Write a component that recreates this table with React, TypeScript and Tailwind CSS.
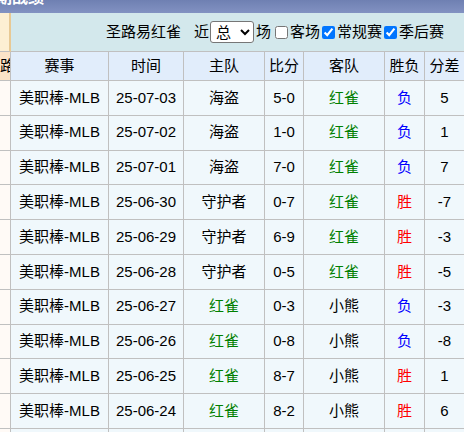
import React from 'react';

type Game = {
  date: string;
  home: string;
  score: string;
  away: string;
  result: '胜' | '负';
  diff: string;
};

const games: Game[] = [
  { date: '25-07-03', home: '海盗', score: '5-0', away: '红雀', result: '负', diff: '5' },
  { date: '25-07-02', home: '海盗', score: '1-0', away: '红雀', result: '负', diff: '1' },
  { date: '25-07-01', home: '海盗', score: '7-0', away: '红雀', result: '负', diff: '7' },
  { date: '25-06-30', home: '守护者', score: '0-7', away: '红雀', result: '胜', diff: '-7' },
  { date: '25-06-29', home: '守护者', score: '6-9', away: '红雀', result: '胜', diff: '-3' },
  { date: '25-06-28', home: '守护者', score: '0-5', away: '红雀', result: '胜', diff: '-5' },
  { date: '25-06-27', home: '红雀', score: '0-3', away: '小熊', result: '负', diff: '-3' },
  { date: '25-06-26', home: '红雀', score: '0-8', away: '小熊', result: '负', diff: '-8' },
  { date: '25-06-25', home: '红雀', score: '8-7', away: '小熊', result: '胜', diff: '1' },
  { date: '25-06-24', home: '红雀', score: '8-2', away: '小熊', result: '胜', diff: '6' },
];

const gridCols = 'grid grid-cols-[11px_98px_75px_81px_39px_81px_40px_40px]';
const cell = 'flex items-center justify-center border-r border-b border-[#c0c0c0] whitespace-nowrap overflow-hidden';

const teamColor = (name: string) => (name === '红雀' ? 'text-[#008000]' : 'text-black');

export default function App() {
  return (
    <div
      className="w-[464px] h-[432px] overflow-hidden bg-white text-[15px] text-black"
      style={{ fontFamily: '"Liberation Sans", "Noto Sans CJK SC", sans-serif' }}
    >
      {/* title bar, mostly scrolled out of view */}
      <div className="h-[13px] overflow-hidden bg-gradient-to-b from-[#6f80b2] to-[#8292c2]">
        <div className="-mt-[12px] -ml-[20px] font-bold text-white text-[16px] leading-[20px] whitespace-nowrap">
          近期战绩
        </div>
      </div>

      {/* toolbar */}
      <div className="flex h-[39px]">
        <div className="w-[11px] bg-[#fdefd3] border-r-2 border-[#e8c994] border-b border-b-[#c0c0c0]" />
        <div className="flex-1 flex items-center justify-end pr-[20px] bg-[#d3e8ec] border-b border-[#c0c0c0] whitespace-nowrap">
          <span>圣路易红雀</span>
          <span className="ml-[13px]">近</span>
          <select
            defaultValue="总"
            className="ml-[1px] w-[44px] h-[22px] text-[15px] bg-white border border-[#767676] rounded-[3px] pl-[1px]"
          >
            <option value="总">总</option>
            <option value="主">主</option>
            <option value="客">客</option>
          </select>
          <span className="ml-[2px]">场</span>
          <input type="checkbox" className="ml-[4px] mr-[2px] w-[13px] h-[13px]" />
          <span>客场</span>
          <input type="checkbox" defaultChecked className="ml-[2px] mr-[2px] w-[13px] h-[13px]" />
          <span>常规赛</span>
          <input type="checkbox" defaultChecked className="ml-[2px] mr-[2px] w-[13px] h-[13px]" />
          <span>季后赛</span>
        </div>
      </div>

      {/* header */}
      <div className={`${gridCols} h-[29px]`}>
        <div className={`${cell} justify-end bg-[#fce4c8]`}>
          <span className="-mr-[5px]">路</span>
        </div>
        {['赛事', '时间', '主队', '比分', '客队', '胜负', '分差'].map((h) => (
          <div key={h} className={`${cell} bg-[#e1edfb]`}>
            {h}
          </div>
        ))}
      </div>

      {/* rows */}
      {games.map((g) => (
        <div key={g.date} className={`${gridCols} h-[34.8px]`}>
          <div className={`${cell} bg-[#fffaf6]`} />
          <div className={`${cell} bg-[#f0f8fc]`}>美职棒-MLB</div>
          <div className={`${cell} bg-[#f0f8fc]`}>{g.date}</div>
          <div className={`${cell} bg-[#f0f8fc] ${teamColor(g.home)}`}>{g.home}</div>
          <div className={`${cell} bg-[#f0f8fc]`}>{g.score}</div>
          <div className={`${cell} bg-[#f0f8fc] ${teamColor(g.away)}`}>{g.away}</div>
          <div className={`${cell} bg-[#f0f8fc] ${g.result === '胜' ? 'text-[#ff0000]' : 'text-[#0000ff]'}`}>
            {g.result}
          </div>
          <div className={`${cell} bg-[#f0f8fc]`}>{g.diff}</div>
        </div>
      ))}

      {/* next row, only its top edge is in view */}
      <div className={`${gridCols} h-[34.8px]`}>
        <div className={`${cell} bg-[#fffaf6]`} />
        {[0, 1, 2, 3, 4, 5, 6].map((i) => (
          <div key={i} className={`${cell} bg-[#f0f8fc]`} />
        ))}
      </div>
    </div>
  );
}
